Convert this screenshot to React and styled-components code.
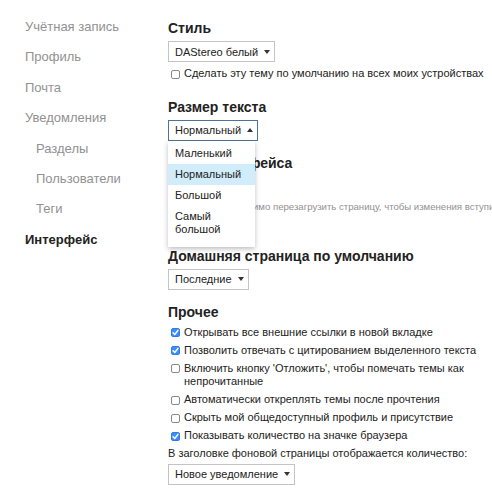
import React from "react";
import styled, { createGlobalStyle } from "styled-components";

// Page reset
const GlobalStyles = createGlobalStyle`
  html, body, #root {
    margin: 0;
    padding: 0;
    background: #fff;
    overflow: hidden;
  }
  body {
    font-family: "Liberation Sans", Arial, sans-serif;
    color: #222;
    width: 492px;
    height: 500px;
  }
`;

const Layout = styled.div`
  display: flex;
  width: 492px;
  height: 500px;
  overflow: hidden;
`;

// Left navigation
const Nav = styled.nav`
  width: 168px;
  flex: 0 0 168px;
  padding-top: 12px;
  box-sizing: border-box;
`;

const NavItem = styled.div`
  height: 30.4px;
  line-height: 30.4px;
  font-size: 13px;
  padding-left: ${(p) => (p.$sub ? 36 : 25)}px;
  color: ${(p) => (p.$active ? "#222" : "#919191")};
  font-weight: ${(p) => (p.$active ? "bold" : "normal")};
  white-space: nowrap;
`;

// Main preferences column
const Main = styled.main`
  flex: 1;
  padding-top: 19px;
  min-width: 0;
`;

const Section = styled.section`
  position: relative;
  margin-bottom: ${(p) => p.$gap ?? 14}px;
`;

const Heading = styled.h3`
  margin: 0 0 4px;
  font-size: 14px;
  line-height: 18px;
  font-weight: bold;
  color: #222;
  white-space: nowrap;
`;

const Select = styled.div`
  display: inline-flex;
  align-items: center;
  gap: 6px;
  height: 21px;
  box-sizing: border-box;
  padding: 0 4px 0 6px;
  font-size: 11px;
  color: #222;
  background: #fff;
  border: 1px solid ${(p) => (p.$open ? "#4f7394" : "#c4c4c4")};
  white-space: nowrap;
`;

const Caret = styled.span`
  width: 0;
  height: 0;
  border-left: 3.5px solid transparent;
  border-right: 3.5px solid transparent;
  ${(p) =>
    p.$up
      ? "border-bottom: 4px solid #333;"
      : "border-top: 4px solid #333;"}
`;

const Menu = styled.ul`
  position: absolute;
  left: 0;
  top: 43px;
  z-index: 10;
  width: 87px;
  margin: 0;
  padding: 2px 0 7px;
  list-style: none;
  background: #fff;
  box-shadow: 0 2px 5px rgba(0, 0, 0, 0.25);
`;

const MenuItem = styled.li`
  padding: 4px 7px;
  font-size: 11px;
  line-height: 13px;
  color: #222;
  background: ${(p) => (p.$hover ? "#d1ecfa" : "#fff")};
`;

const Hint = styled.div`
  margin-top: 3px;
  font-size: 9.6px;
  line-height: 13px;
  color: #919191;
  white-space: nowrap;
`;

const Row = styled.label`
  display: flex;
  align-items: flex-start;
  gap: 4px;
  margin: ${(p) => (p.$first ? "5px" : "0")} 0 4.5px 3px;
  font-size: 11px;
  line-height: 13.5px;
  color: #222;
`;

const Box = styled.span`
  flex: 0 0 auto;
  width: 9px;
  height: 9px;
  margin-top: 2.5px;
  box-sizing: border-box;
  border-radius: 2px;
  border: 1px solid ${(p) => (p.$checked ? "#2f7fe6" : "#8a8a8a")};
  background: ${(p) => (p.$checked ? "#3e8ef7" : "#fff")};
  display: flex;
  align-items: center;
  justify-content: center;
`;

const Text = styled.div`
  font-size: 11px;
  line-height: 13.5px;
  margin: 0 0 3px;
`;

const Checkbox = ({ checked, first, children }) => (
  <Row $first={first}>
    <Box $checked={checked}>
      {checked && (
        <svg width="7" height="7" viewBox="0 0 8 8">
          <path d="M1.2 4.2 L3.2 6.2 L6.8 1.6" fill="none" stroke="#fff" strokeWidth="1.7" strokeLinecap="round" strokeLinejoin="round" />
        </svg>
      )}
    </Box>
    <span>{children}</span>
  </Row>
);

const nav = [
  { label: "Учётная запись" },
  { label: "Профиль" },
  { label: "Почта" },
  { label: "Уведомления" },
  { label: "Разделы", sub: true },
  { label: "Пользователи", sub: true },
  { label: "Теги", sub: true },
  { label: "Интерфейс", active: true },
];

const App = () => {
  return (
    <>
      <GlobalStyles />
      <Layout>
        <Nav>
          {nav.map((n) => (
            <NavItem key={n.label} $sub={n.sub} $active={n.active}>
              {n.label}
            </NavItem>
          ))}
        </Nav>
        <Main>
          <Section $gap={17}>
            <Heading>Стиль</Heading>
            <Select>
              DAStereo белый <Caret />
            </Select>
            <Checkbox first>Сделать эту тему по умолчанию на всех моих устройствах</Checkbox>
          </Section>

          <Section $gap={13} style={{ zIndex: 2 }}>
            <Heading>Размер текста</Heading>
            <Select $open>
              Нормальный <Caret $up />
            </Select>
            <Menu>
              <MenuItem>Маленький</MenuItem>
              <MenuItem $hover>Нормальный</MenuItem>
              <MenuItem>Большой</MenuItem>
              <MenuItem>Самый большой</MenuItem>
            </Menu>
          </Section>

          <Section $gap={34}>
            <Heading>Язык интерфейса</Heading>
            <Select>
              Русский <Caret />
            </Select>
            <Hint>Вам будет необходимо перезагрузить страницу, чтобы изменения вступили в силу.</Hint>
          </Section>

          <Section $gap={13}>
            <Heading>Домашняя страница по умолчанию</Heading>
            <Select>
              Последние <Caret />
            </Select>
          </Section>

          <Section>
            <Heading>Прочее</Heading>
            <Checkbox checked first>Открывать все внешние ссылки в новой вкладке</Checkbox>
            <Checkbox checked>Позволить отвечать с цитированием выделенного текста</Checkbox>
            <Checkbox>
              Включить кнопку 'Отложить', чтобы помечать темы как непрочитанные
            </Checkbox>
            <Checkbox>Автоматически откреплять темы после прочтения</Checkbox>
            <Checkbox>Скрыть мой общедоступный профиль и присутствие</Checkbox>
            <Checkbox checked>Показывать количество на значке браузера</Checkbox>
            <Text>В заголовке фоновой страницы отображается количество:</Text>
            <Select>
              Новое уведомление <Caret />
            </Select>
          </Section>
        </Main>
      </Layout>
    </>
  );
};

export default App;
